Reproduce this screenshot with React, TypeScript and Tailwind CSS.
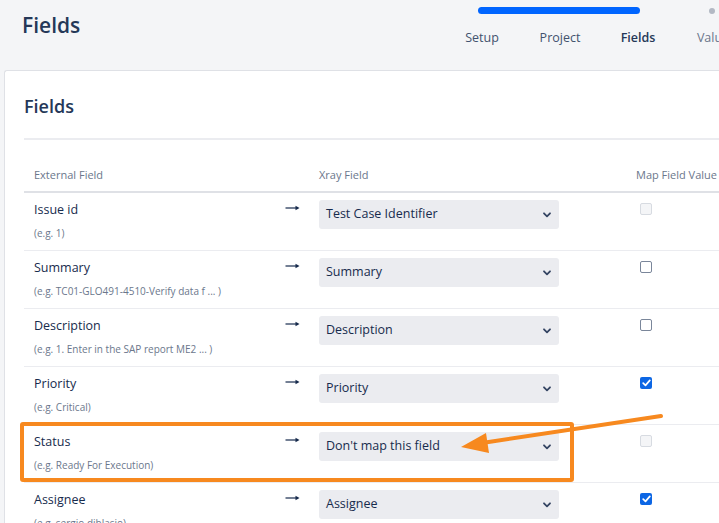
import React from 'react';

type Row = {
  name: string;
  hint: string;
  value: string;
  check: 'disabled' | 'off' | 'on';
};

const rows: Row[] = [
  { name: 'Issue id', hint: '(e.g. 1)', value: 'Test Case Identifier', check: 'disabled' },
  { name: 'Summary', hint: '(e.g. TC01-GLO491-4510-Verify data f ... )', value: 'Summary', check: 'off' },
  { name: 'Description', hint: '(e.g. 1. Enter in the SAP report ME2 ... )', value: 'Description', check: 'off' },
  { name: 'Priority', hint: '(e.g. Critical)', value: 'Priority', check: 'on' },
  { name: 'Status', hint: '(e.g. Ready For Execution)', value: "Don't map this field", check: 'disabled' },
  { name: 'Assignee', hint: '(e.g. sergio.diblasio)', value: 'Assignee', check: 'on' },
];

const Chevron = () => (
  <svg width="8" height="6" viewBox="0 0 8 6" className="shrink-0">
    <path d="M1 1.3 L4 4.3 L7 1.3" fill="none" stroke="#344563" strokeWidth="1.8" strokeLinecap="round" strokeLinejoin="round" />
  </svg>
);

const MapArrow = () => (
  <svg width="15" height="6" viewBox="0 0 15 6">
    <path d="M0.5 3 H13" stroke="#172b4d" strokeWidth="1.2" />
    <path d="M10.5 0.8 L14.5 3 L10.5 5.2 Z" fill="#172b4d" />
  </svg>
);

const Checkbox = ({ state }: { state: Row['check'] }) => {
  if (state === 'on') {
    return (
      <div className="w-[12px] h-[12px] rounded-[2px] bg-[#0c66e4] flex items-center justify-center">
        <svg width="9" height="8" viewBox="0 0 9 8">
          <path d="M1.2 4.2 L3.5 6.4 L7.8 1.4" fill="none" stroke="white" strokeWidth="1.7" strokeLinecap="round" strokeLinejoin="round" />
        </svg>
      </div>
    );
  }
  if (state === 'disabled') {
    return <div className="w-[12px] h-[12px] rounded-[2px] border border-[#d7dbe1] bg-[#f4f5f7]" />;
  }
  return <div className="w-[12px] h-[12px] rounded-[2px] border border-[#7a869a] bg-white" />;
};

export default function App() {
  return (
    <div
      className="relative w-full h-[523px] overflow-hidden bg-[#f4f5f7] text-[#172b4d]"
      style={{ fontFamily: '"Open Sans", "Noto Sans", sans-serif' }}
    >
      {/* Header */}
      <header className="flex h-[70px]">
        <h1 className="pl-[22px] pt-[9px] text-[21px] leading-[32px] font-semibold text-[#253858]">Fields</h1>
        <nav className="ml-auto w-[276px] shrink-0 pt-[7px]">
          <div className="flex items-center h-[7px]">
            <div className="ml-[35px] w-[162px] h-[7px] rounded-full bg-[#0065ff]" />
            <div className="ml-[69px] w-[6px] h-[6px] rounded-full bg-[#b3b9c4]" />
          </div>
          <div className="flex mt-[15px] text-[12.5px] leading-[18px] whitespace-nowrap">
            <span className="w-[78px] shrink-0 text-center text-[#42526e]">Setup</span>
            <span className="w-[78px] shrink-0 text-center text-[#42526e]">Project</span>
            <span className="w-[78px] shrink-0 text-center font-semibold text-[#253858]">Fields</span>
            <span className="w-[78px] shrink-0 text-center text-[#6b778c]">Values</span>
          </div>
        </nav>
      </header>

      {/* Card */}
      <div className="ml-[4px] w-[780px] bg-white border-t border-l border-[#dfe1e6] rounded-tl-[3px] h-[460px]">
        <div className="pl-[19px]">
          <h2 className="pt-[22px] text-[18px] leading-[26px] font-semibold text-[#253858]">Fields</h2>
          <div className="mt-[19px] h-[2px] bg-[#ebecf0]" />

          {/* Table header */}
          <div className="flex pt-[27px] pb-[8px] text-[11px] leading-[16px] text-[#6b778c] border-b-2 border-[#dfe1e6]">
            <div className="w-[257px] shrink-0 pl-[10px]">External Field</div>
            <div className="w-[38px] shrink-0" />
            <div className="w-[317px] shrink-0">Xray Field</div>
            <div className="whitespace-nowrap">Map Field Value</div>
          </div>

          {rows.map((r) => (
            <div key={r.name} className="flex h-[58px] border-b border-[#ebecf0]">
              <div className="w-[257px] shrink-0 pl-[10px] pt-[8px]">
                <div className="text-[12.5px] leading-[18px] text-[#172b4d]">{r.name}</div>
                <div className="mt-[7px] text-[10px] leading-[14px] text-[#6b778c] whitespace-nowrap">{r.hint}</div>
              </div>
              <div className="w-[38px] shrink-0 pt-[12px] pl-[4px]">
                <MapArrow />
              </div>
              <div className="w-[317px] shrink-0 pt-[7px]">
                <div className="w-[240px] h-[29px] rounded-[3px] bg-[#ebecf0] flex items-center justify-between pl-[7px] pr-[8px] text-[12.5px] text-[#172b4d]">
                  <span>{r.value}</span>
                  <Chevron />
                </div>
              </div>
              <div className="pt-[10px] pl-[4px]">
                <Checkbox state={r.check} />
              </div>
            </div>
          ))}
        </div>
      </div>

      {/* Annotation: highlight box */}
      <div className="absolute left-[20px] top-[422px] w-[554px] h-[60px] border-4 border-[#f7891f] rounded-[3px] pointer-events-none" />

      {/* Annotation: arrow */}
      <svg className="absolute left-0 top-0 pointer-events-none" width="719" height="523" viewBox="0 0 719 523">
        <line x1="661" y1="416" x2="482" y2="443" stroke="#f7891f" strokeWidth="4" strokeLinecap="round" />
        <polygon points="461,447 486,433 489,453" fill="#f7891f" />
      </svg>
    </div>
  );
}
